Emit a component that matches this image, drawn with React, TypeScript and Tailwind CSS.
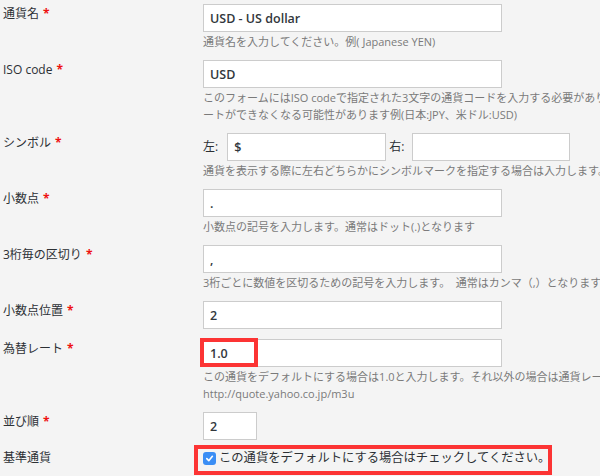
import React from "react";

const FONT = "font-['Open_Sans','Noto_Sans_CJK_JP',sans-serif]";

function Row({
  label,
  required = true,
  children,
  className = "",
}: {
  label: string;
  required?: boolean;
  children: React.ReactNode;
  className?: string;
}) {
  return (
    <div className={`flex ${className}`}>
      <div className="w-[203px] shrink-0 pl-[3px] text-[12px] leading-[20px] text-[#2c3034]">
        {label}
        {required && <span className="ml-[4px] font-bold text-[#ee1111]">*</span>}
      </div>
      <div className="relative min-w-0 flex-1">{children}</div>
    </div>
  );
}

function Field({ value, w = "w-[299px]" }: { value: string; w?: string }) {
  return (
    <input
      readOnly
      value={value}
      className={`block h-[28px] ${w} border border-[#cccccc] bg-white px-[6px] text-[12.5px] font-semibold text-[#32373c] outline-none`}
    />
  );
}

function Help({ children }: { children: React.ReactNode }) {
  return (
    <p className="mt-[1px] whitespace-nowrap text-[11px] leading-[17px] text-[#7a7a7a]">{children}</p>
  );
}

export default function App() {
  return (
    <div className={`h-[476px] w-[600px] overflow-hidden bg-[#f4f4f4] pt-[4px] ${FONT}`}>
      <div className="flex flex-col gap-[10px]">
        <Row label="通貨名">
          <Field value="USD - US dollar" />
          <Help>通貨名を入力してください。例( Japanese YEN)</Help>
        </Row>

        <Row label="ISO code">
          <Field value="USD" />
          <Help>
            このフォームにはISO codeで指定された3文字の通貨コードを入力する必要があります。入力されていない場合はレートのアップデ
            <br />
            ートができなくなる可能性があります例(日本:JPY、米ドル:USD)
          </Help>
        </Row>

        <Row label="シンボル">
          <div className="flex items-center text-[12px] text-[#2c3034]">
            <span className="mr-[9px]">左:</span>
            <Field value="$" w="w-[159px]" />
            <span className="ml-[3px] mr-[8px]">右:</span>
            <Field value="" w="w-[158px]" />
          </div>
          <Help>通貨を表示する際に左右どちらかにシンボルマークを指定する場合は入力します。</Help>
        </Row>

        <Row label="小数点">
          <Field value="." />
          <Help>小数点の記号を入力します。通常はドット(.)となります</Help>
        </Row>

        <Row label="3桁毎の区切り">
          <Field value="," />
          <Help>3桁ごとに数値を区切るための記号を入力します。　通常はカンマ（,）となります</Help>
        </Row>

        <Row label="小数点位置">
          <Field value="2" />
        </Row>

        <Row label="為替レート">
          <div className="relative">
            <Field value="1.0" />
            <div className="pointer-events-none absolute left-[-3px] top-[-1px] h-[29px] w-[58px] border-[4px] border-[#fc3434]" />
          </div>
          <Help>
            この通貨をデフォルトにする場合は1.0と入力します。それ以外の場合は通貨レートを入力してください。
            <br />
            http://quote.yahoo.co.jp/m3u
          </Help>
        </Row>

        <Row label="並び順">
          <Field value="2" w="w-[54px]" />
        </Row>

        <Row label="基準通貨" required={false} className="mt-[-2px]">
          <div className="flex h-[20px] items-center text-[12.3px] text-[#2c3034]">
            <span className="mr-[3px] flex h-[13px] w-[13px] items-center justify-center rounded-[3px] bg-[#3b8ef5]">
              <svg width="9" height="9" viewBox="0 0 10 10" fill="none">
                <path d="M2 5.2 L4.2 7.4 L8.2 2.6" stroke="white" strokeWidth="1.8" strokeLinecap="round" strokeLinejoin="round" />
              </svg>
            </span>
            この通貨をデフォルトにする場合はチェックしてください。
          </div>
          <div className="pointer-events-none absolute left-[-9px] top-[-3px] h-[30px] w-[358px] border-[4px] border-[#fc3434]" />
        </Row>
      </div>
    </div>
  );
}
